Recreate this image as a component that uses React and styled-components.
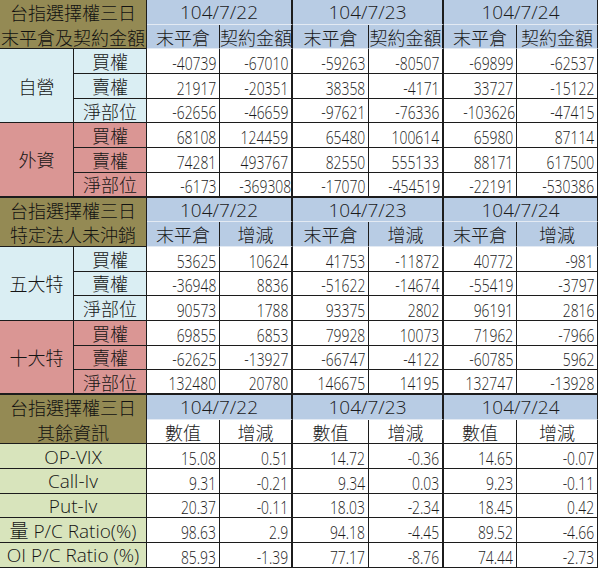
import React from "react";
import styled, { createGlobalStyle } from "styled-components";

const DARK = "#1c1c1c";
const OLIVE = "#948a54";
const BLUE = "#b8cce4";
const CYAN = "#daeef3";
const PINK = "#da9694";
const GREEN = "#d8e4bc";

const GlobalStyle = createGlobalStyle`
  html, body { margin: 0; padding: 0; background: #fff; }
  body { font-family: "Noto Sans CJK TC", "Liberation Sans", sans-serif; color: #151515; }
`;

const Sheet = styled.table`
  width: 598px;
  table-layout: fixed;
  border-collapse: separate;
  border-spacing: 0;
`;

const Row = styled.tr`
  height: 24.7px;
`;

const BaseCell = styled.td`
  box-sizing: border-box;
  padding: 0;
  white-space: nowrap;
  vertical-align: middle;
  line-height: 20px;
  font-weight: 300;
  border-right: ${(p) => p.$br || `1px solid ${DARK}`};
  border-bottom: ${(p) => p.$bb || `1px solid ${DARK}`};
`;

const TitleCell = styled(BaseCell)`
  background: ${OLIVE};
  text-align: center;
  font-family: "Noto Sans CJK TC", sans-serif;
  font-size: 18px;
  color: #111;
  overflow: hidden;
`;

const DateCell = styled(BaseCell)`
  background: ${BLUE};
  text-align: center;
  font-family: "Open Sans", "Liberation Sans", sans-serif;
  font-size: 19px;
  color: #1a1a1a;
  padding-top: 1px;
`;

const SubHeadCell = styled(BaseCell)`
  background: ${(p) => p.$bg};
  text-align: center;
  font-family: "Noto Sans CJK TC", sans-serif;
  font-size: 18px;
  color: #1a1a1a;
`;

const GroupCell = styled(BaseCell)`
  background: ${(p) => p.$bg};
  text-align: center;
  font-family: "Noto Sans CJK TC", sans-serif;
  font-size: 18px;
`;

const LabelCell = styled(BaseCell)`
  background: ${(p) => p.$bg};
  text-align: center;
  font-family: "Noto Sans CJK TC", sans-serif;
  font-size: 18px;
`;

const InfoLabelCell = styled(BaseCell)`
  background: ${GREEN};
  text-align: center;
  font-family: "Open Sans", "Noto Sans CJK TC", sans-serif;
  font-size: 19px;
  padding-top: 1px;
`;

const NumCell = styled(BaseCell)`
  background: #fff;
  text-align: right;
  vertical-align: bottom;
  line-height: 17px;
  padding: 0 3px 1px 0;
`;

const NumText = styled.span`
  display: inline-block;
  font-family: "Open Sans", "Liberation Sans", sans-serif;
  font-weight: 300;
  font-size: 19px;
  color: #1a1a1a;
  transform: scaleX(0.73);
  transform-origin: right center;
`;

const COLS = [74, 73, 73, 73, 76, 75, 73, 81];
const DATES = ["104/7/22", "104/7/23", "104/7/24"];

const sections = [
  {
    title: ["台指選擇權三日", "末平倉及契約金額"],
    sub: ["末平倉", "契約金額"],
    subBg: BLUE,
    groups: [
      {
        name: "自營",
        bg: CYAN,
        rows: [
          ["買權", "-40739", "-67010", "-59263", "-80507", "-69899", "-62537"],
          ["賣權", "21917", "-20351", "38358", "-4171", "33727", "-15122"],
          ["淨部位", "-62656", "-46659", "-97621", "-76336", "-103626", "-47415"],
        ],
      },
      {
        name: "外資",
        bg: PINK,
        rows: [
          ["買權", "68108", "124459", "65480", "100614", "65980", "87114"],
          ["賣權", "74281", "493767", "82550", "555133", "88171", "617500"],
          ["淨部位", "-6173", "-369308", "-17070", "-454519", "-22191", "-530386"],
        ],
      },
    ],
  },
  {
    title: ["台指選擇權三日", "特定法人未沖銷"],
    sub: ["末平倉", "增減"],
    subBg: BLUE,
    groups: [
      {
        name: "五大特",
        bg: CYAN,
        rows: [
          ["買權", "53625", "10624", "41753", "-11872", "40772", "-981"],
          ["賣權", "-36948", "8836", "-51622", "-14674", "-55419", "-3797"],
          ["淨部位", "90573", "1788", "93375", "2802", "96191", "2816"],
        ],
      },
      {
        name: "十大特",
        bg: PINK,
        rows: [
          ["買權", "69855", "6853", "79928", "10073", "71962", "-7966"],
          ["賣權", "-62625", "-13927", "-66747", "-4122", "-60785", "5962"],
          ["淨部位", "132480", "20780", "146675", "14195", "132747", "-13928"],
        ],
      },
    ],
  },
  {
    title: ["台指選擇權三日", "其餘資訊"],
    sub: ["數值", "增減"],
    subBg: "#ffffff",
    info: [
      ["OP-VIX", "15.08", "0.51", "14.72", "-0.36", "14.65", "-0.07"],
      ["Call-Iv", "9.31", "-0.21", "9.34", "0.03", "9.23", "-0.11"],
      ["Put-Iv", "20.37", "-0.11", "18.03", "-2.34", "18.45", "0.42"],
      ["量 P/C Ratio(%)", "98.63", "2.9", "94.18", "-4.45", "89.52", "-4.66"],
      ["OI P/C Ratio (%)", "85.93", "-1.39", "77.17", "-8.76", "74.44", "-2.73"],
    ],
  },
];

const thick = `2px solid ${DARK}`;
const thin = `1px solid ${DARK}`;
const light = `1px solid #e3eaf3`;

// right border for data column index 0..5
const dataRight = (i) => (i % 2 === 0 ? thin : i === 5 ? thin : thick);

function NumberCells({ values, bottom }) {
  return values.map((v, i) => (
    <NumCell key={i} $br={dataRight(i)} $bb={bottom}>
      <NumText>{v}</NumText>
    </NumCell>
  ));
}

function SectionHeader({ section }) {
  return (
    <>
      <Row>
        <TitleCell colSpan={2} $bb="none">
          {section.title[0]}
        </TitleCell>
        {DATES.map((d, i) => (
          <DateCell key={d} colSpan={2} $br={i === 2 ? thin : thick} $bb={light}>
            {d}
          </DateCell>
        ))}
      </Row>
      <Row>
        <TitleCell colSpan={2}>{section.title[1]}</TitleCell>
        {[0, 1, 2, 3, 4, 5].map((i) => (
          <SubHeadCell
            key={i}
            $bg={section.subBg}
            $br={dataRight(i)}
            $bb={section.subBg === BLUE ? light : thin}
          >
            {section.sub[i % 2]}
          </SubHeadCell>
        ))}
      </Row>
    </>
  );
}

function GroupRows({ group, last }) {
  return group.rows.map((r, ri) => {
    const isLastRow = ri === group.rows.length - 1;
    const bottom = last && isLastRow ? thick : thin;
    return (
      <Row key={ri}>
        {ri === 0 && (
          <GroupCell rowSpan={3} $bg={group.bg} $bb={last ? thick : thin}>
            {group.name}
          </GroupCell>
        )}
        <LabelCell $bg={group.bg} $bb={bottom}>
          {r[0]}
        </LabelCell>
        <NumberCells values={r.slice(1)} bottom={bottom} />
      </Row>
    );
  });
}

function InfoRows({ rows }) {
  return rows.map((r, ri) => (
    <Row key={ri}>
      <InfoLabelCell colSpan={2}>{r[0]}</InfoLabelCell>
      <NumberCells values={r.slice(1)} bottom={thin} />
    </Row>
  ));
}

export default function App() {
  return (
    <>
      <GlobalStyle />
      <Sheet>
        <colgroup>
          {COLS.map((w, i) => (
            <col key={i} style={{ width: w }} />
          ))}
        </colgroup>
        <tbody>
          {sections.map((s, si) => (
            <React.Fragment key={si}>
              <SectionHeader section={s} />
              {s.groups &&
                s.groups.map((g, gi) => (
                  <GroupRows key={gi} group={g} last={gi === s.groups.length - 1} />
                ))}
              {s.info && <InfoRows rows={s.info} />}
            </React.Fragment>
          ))}
        </tbody>
      </Sheet>
    </>
  );
}
